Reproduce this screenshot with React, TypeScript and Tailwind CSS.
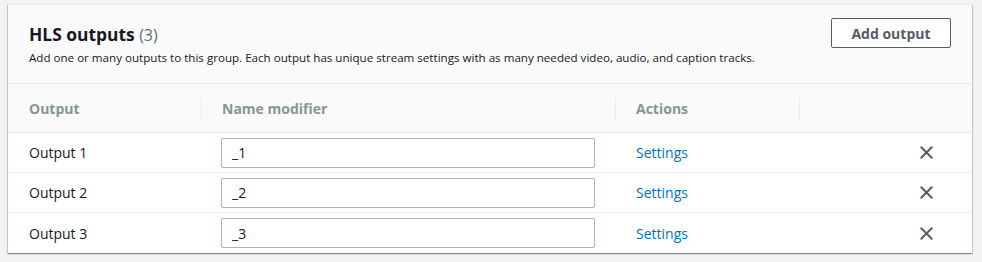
import { X } from "lucide-react";

const rows = [
  { name: "Output 1", modifier: "_1" },
  { name: "Output 2", modifier: "_2" },
  { name: "Output 3", modifier: "_3" },
];

const cols = "grid grid-cols-[193px_414px_184px_173px]";

export default function App() {
  return (
    <div className="min-h-[262px] w-full bg-[#f2f3f3] px-[8px] pt-[4px] font-['Open_Sans',sans-serif]">
      <div className="w-[964px] border-t border-[#eaeded] bg-white shadow-[0_1px_1px_0_rgba(0,28,36,0.3),1px_1px_1px_0_rgba(0,28,36,0.15),-1px_1px_1px_0_rgba(0,28,36,0.15)]">
        <div className="flex items-start justify-between border-b border-[#eaeded] bg-[#fafafa] pb-[17px] pl-[21px] pr-[21px] pt-[13px]">
          <div className="pt-[4px]">
            <h2 className="text-[17.4px] leading-[24px] font-bold text-[#16191f]">
              HLS outputs <span className="text-[16px] font-normal text-[#687078]">(3)</span>
            </h2>
            <p className="mt-[3px] text-[11.6px] leading-[16px] text-[#16191f]">
              Add one or many outputs to this group. Each output has unique stream settings with as many needed video, audio, and caption tracks.
            </p>
          </div>
          <button className="h-[30px] w-[120px] rounded-[2px] border border-[#545b64] bg-white text-[14px] font-bold text-[#545b64]">
            Add output
          </button>
        </div>

        <div className={`${cols} h-[49px] items-center border-b border-[#eaeded] bg-[#fafafa] text-[14px] font-bold text-[#879596]`}>
          <div className="pl-[21px]">Output</div>
          <div className="border-l border-[#eaeded] pl-[20px] leading-[23px]">Name modifier</div>
          <div className="border-l border-[#eaeded] pl-[20px] leading-[23px]">Actions</div>
          <div className="h-[23px] border-l border-[#eaeded]"></div>
        </div>

        {rows.map((r, i) => (
          <div
            key={r.name}
            className={`${cols} h-[40px] items-center text-[14px] text-[#16191f] ${i < rows.length - 1 ? "border-b border-[#eaeded]" : ""}`}
          >
            <div className="pl-[21px]">{r.name}</div>
            <div className="pl-[20px] pr-[20px]">
              <input
                readOnly
                value={r.modifier}
                className="h-[30px] w-full rounded-[2px] border border-[#aab7b8] bg-white px-[10px] text-[14px] text-[#16191f] outline-none"
              />
            </div>
            <div className="pl-[21px]">
              <a className="cursor-pointer text-[#0073bb]">Settings</a>
            </div>
            <div className="flex justify-end pr-[35px]">
              <X className="h-[21px] w-[21px] text-[#545b64]" strokeWidth={2.2} />
            </div>
          </div>
        ))}
      </div>
    </div>
  );
}
